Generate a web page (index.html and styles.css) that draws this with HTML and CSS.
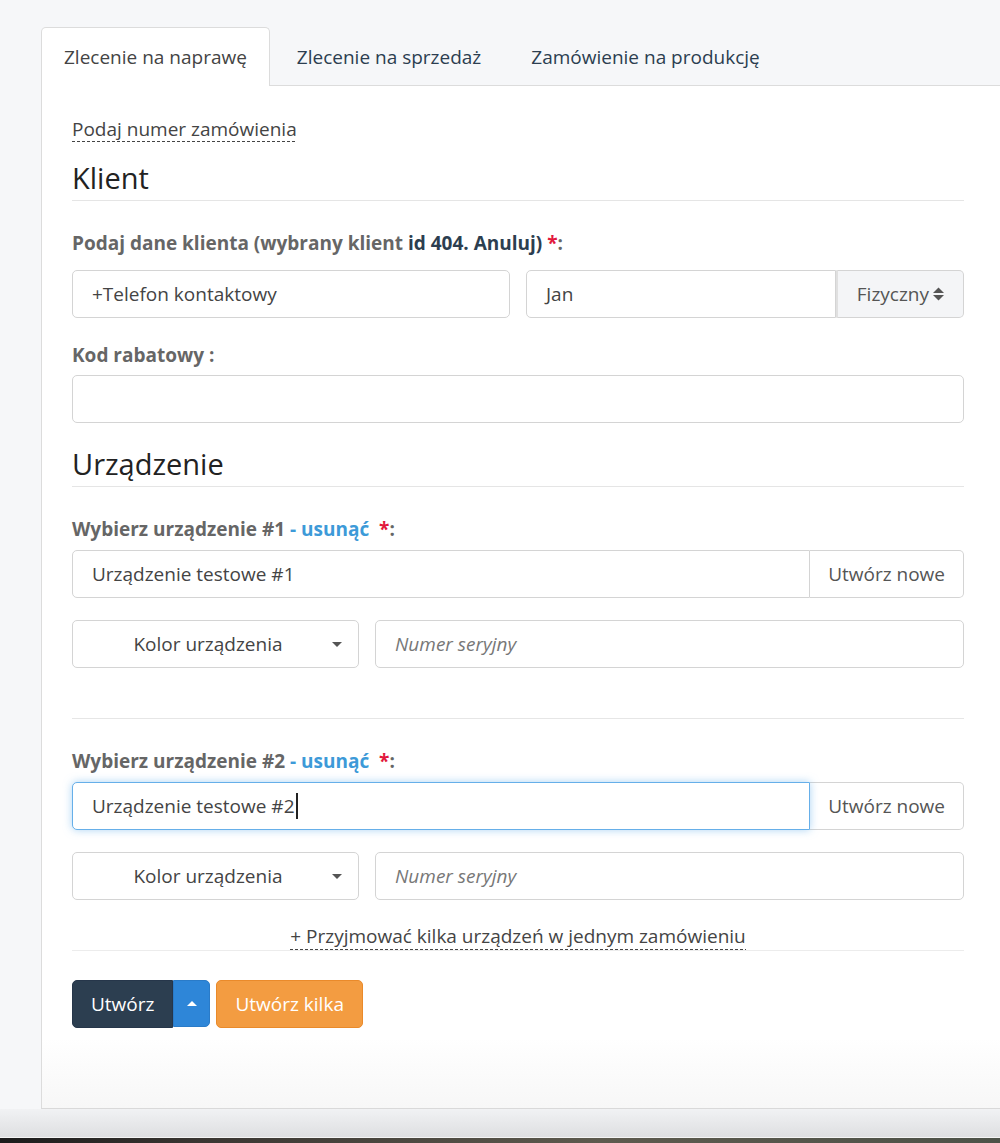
FILE: index.html
```html
<!DOCTYPE html>
<html lang="pl">
<head>
<meta charset="utf-8">
<title>Nowe zlecenie</title>
<link rel="stylesheet" href="styles.css">
</head>
<body>
<div class="screen">
  <div class="workspace">
    <ul class="tabs">
      <li class="tab active">Zlecenie na naprawę</li>
      <li class="tab">Zlecenie na sprzedaż</li>
      <li class="tab">Zamówienie na produkcję</li>
    </ul>

    <div class="panel">
      <div class="order-line"><a class="dashed-link">Podaj numer zamówienia</a></div>

      <h3 class="section-title">Klient</h3>

      <div class="field-label label-client">Podaj dane klienta (wybrany klient <span class="accent">id 404. Anuluj)</span> <span class="req">*</span>:</div>
      <div class="row-half">
        <div class="control">+Telefon kontaktowy</div>
        <div class="group">
          <div class="control control-left">Jan</div>
          <div class="addon addon-grey">Fizyczny
            <svg class="sort-icon" width="11" height="14" viewBox="0 0 11 14"><polygon points="0,6 5.5,0.5 11,6"/><polygon points="0,8 5.5,13.5 11,8"/></svg>
          </div>
        </div>
      </div>

      <div class="field-label label-tight">Kod rabatowy :</div>
      <div class="control control-empty"></div>

      <h3 class="section-title section-device">Urządzenie</h3>

      <div class="field-label label-device">Wybierz urządzenie #1 <span class="remove">- usunąć</span>&nbsp; <span class="req">*</span>:</div>
      <div class="group">
        <div class="control control-left">Urządzenie testowe #1</div>
        <div class="addon">Utwórz nowe</div>
      </div>
      <div class="row-device">
        <div class="control select">
          <span class="select-text">Kolor urządzenia</span>
          <svg class="select-caret" width="10" height="5" viewBox="0 0 10 5"><polygon points="0,0 10,0 5,5"/></svg>
        </div>
        <div class="control placeholder">Numer seryjny</div>
      </div>

      <div class="device-sep"></div>

      <div class="field-label label-device-2">Wybierz urządzenie #2 <span class="remove">- usunąć</span>&nbsp; <span class="req">*</span>:</div>
      <div class="group">
        <div class="control control-left focused">Urządzenie testowe #2<span class="text-caret"></span></div>
        <div class="addon">Utwórz nowe</div>
      </div>
      <div class="row-device">
        <div class="control select">
          <span class="select-text">Kolor urządzenia</span>
          <svg class="select-caret" width="10" height="5" viewBox="0 0 10 5"><polygon points="0,0 10,0 5,5"/></svg>
        </div>
        <div class="control placeholder">Numer seryjny</div>
      </div>

      <div class="more-line"><a class="dashed-link more-link">+ Przyjmować kilka urządzeń w jednym zamówieniu</a></div>

      <div class="actions">
        <div class="split">
          <button class="btn btn-dark">Utwórz</button>
          <button class="btn btn-blue"><svg width="10" height="5" viewBox="0 0 10 5"><polygon points="0,5 10,5 5,0"/></svg></button>
        </div>
        <button class="btn btn-orange">Utwórz kilka</button>
      </div>
    </div>
  </div>
  <div class="floor"></div>
  <div class="dock"></div>
</div>
</body>
</html>
```

FILE: styles.css
```css
* { box-sizing: border-box; }

html, body {
  margin: 0;
  height: 1143px;
  overflow: hidden;
}

body {
  background: #f6f7f9;
  font-family: "Open Sans", "Noto Sans", sans-serif;
  color: #444;
}

.screen {
  display: flex;
  flex-direction: column;
  height: 1143px;
}

.workspace {
  padding: 27px 0 0 41px;
}

/* tabs */
.tabs {
  list-style: none;
  margin: 0;
  padding: 0;
  display: flex;
  align-items: flex-start;
  height: 59px;
  border-bottom: 1px solid #dcdcdc;
}

.tab {
  height: 58px;
  padding: 0 22px;
  margin-right: 4px;
  display: flex;
  align-items: center;
  font-size: 19px;
  color: #2c3e50;
  border: 1px solid transparent;
  border-bottom: none;
  border-radius: 5px 5px 0 0;
}

.tab.active {
  height: 59px;
  background: #fff;
  border-color: #dcdcdc;
  color: #444;
}

/* panel */
.panel {
  background: linear-gradient(to bottom, #fff calc(100% - 70px), #f7f7f7);
  border-left: 1px solid #dcdcdc;
  border-bottom: 1px solid #d9d9d9;
  padding: 31px 36px 80px 30px;
}

.order-line {
  display: flex;
}

/* dashed underline drawn as a repeating gradient for longer dashes */
.dashed-link {
  font-size: 19px;
  line-height: 24px;
  color: #444;
  padding-bottom: 1px;
  background-image: linear-gradient(to right, #444 60%, transparent 60%);
  background-size: 5px 1px;
  background-repeat: repeat-x;
  background-position: left bottom;
  cursor: pointer;
}

.section-title {
  margin: 18px 0 0;
  font-size: 29px;
  font-weight: 400;
  line-height: 36px;
  padding-bottom: 4px;
  border-bottom: 1px solid #e5e5e5;
  color: #222;
}

.section-device {
  margin-top: 23px;
}

.field-label {
  font-size: 19px;
  font-weight: 700;
  line-height: 24px;
  color: #666;
}

.label-client { margin: 30px 0 15px; }
.label-tight { margin: 25px 0 8px; }
.label-device { margin: 30px 0 9px; }
.label-device-2 { margin: 0 0 9px; }

.accent { color: #2c3e50; }
.req { color: #e2183d; }
.remove { color: #3d9ad8; }

/* form controls */
.control {
  height: 48px;
  display: flex;
  align-items: center;
  padding: 0 19px;
  background: #fff;
  border: 1px solid #d4d4d4;
  border-radius: 5px;
  font-size: 19px;
  color: #444;
  white-space: nowrap;
}

.row-half {
  display: grid;
  grid-template-columns: 1fr 1fr;
  gap: 16px;
}

.group {
  display: flex;
}

.group .control-left {
  flex: 1;
  border-radius: 5px 0 0 5px;
}

.addon {
  display: flex;
  align-items: center;
  gap: 4px;
  padding: 0 18px;
  background: #fff;
  border: 1px solid #d4d4d4;
  border-left: none;
  border-radius: 0 5px 5px 0;
  font-size: 19px;
  color: #555;
  white-space: nowrap;
}

.addon-grey {
  background: #f4f5f7;
  border-left: 2px solid #e0e0e0;
  padding: 0 19px;
}

.sort-icon { fill: #555; }

.focused {
  position: relative;
  z-index: 1;
  border-color: #66afe9;
  box-shadow: 0 0 8px rgba(102, 175, 233, 0.55);
}

.text-caret {
  display: inline-block;
  width: 2px;
  height: 26px;
  margin-left: 1px;
  background: #222;
}

.row-device {
  display: grid;
  grid-template-columns: 287px 1fr;
  gap: 16px;
  margin-top: 22px;
}

.select {
  padding-right: 16px;
  gap: 8px;
}

.select-text {
  flex: 1;
  text-align: center;
}

.select-caret { fill: #555; }

.placeholder {
  font-style: italic;
  color: #777;
}

.device-sep {
  margin: 50px 0 30px;
  border-top: 1px solid #e6e6e6;
}

.more-line {
  display: flex;
  justify-content: center;
  margin-top: 24px;
  border-bottom: 1px solid #ececec;
}

.more-link {
  padding-bottom: 2px;
}

/* buttons */
.actions {
  display: flex;
  gap: 6px;
  margin-top: 29px;
}

.split {
  display: flex;
}

.btn {
  height: 48px;
  display: flex;
  align-items: center;
  justify-content: center;
  padding: 0 18px;
  font-family: inherit;
  font-size: 19px;
  color: #fff;
  border-radius: 5px;
  cursor: pointer;
}

.btn-dark {
  background: #2c3e50;
  border: 1px solid #26364a;
  border-radius: 5px 0 0 5px;
}

.btn-blue {
  width: 37px;
  padding: 0;
  height: 47px;
  background: #2e86d8;
  border: 1px solid #2a7bc8;
  border-radius: 0 5px 5px 0;
}

.btn-blue svg { fill: #fff; }

.btn-orange {
  background: #f39c41;
  border: 1px solid #ea8a2a;
}

/* area below the panel */
.floor {
  flex: 1;
  background: linear-gradient(to bottom, #f1f2f4, #dedfe1);
  border-bottom: 1px solid #f5f5f5;
}

.dock {
  height: 5px;
  background: linear-gradient(to right, #1b1b1b, #3a3632 20%, #5d5a4e 60%, #4d5248);
}
```
